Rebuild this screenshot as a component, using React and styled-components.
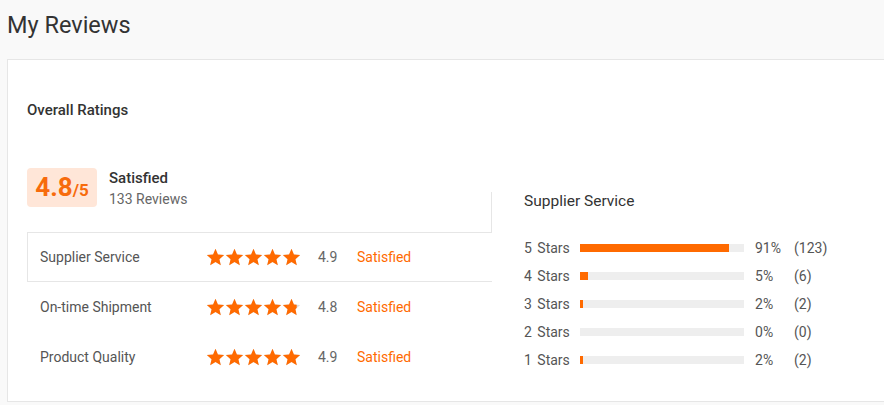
import React from "react";
import styled, { createGlobalStyle } from "styled-components";

const GlobalStyle = createGlobalStyle`
  body {
    margin: 0;
    background: #f9f9f9;
    font-family: Roboto, "Liberation Sans", Arial, sans-serif;
    overflow: hidden;
  }
`;

const Page = styled.div`
  width: 884px;
  height: 405px;
  overflow: hidden;
`;

const Title = styled.h1`
  margin: 0;
  height: 59px;
  padding: 11px 0 0 7px;
  box-sizing: border-box;
  font-size: 23.5px;
  line-height: 28px;
  font-weight: 400;
  color: #333;
`;

const Card = styled.div`
  margin-left: 7px;
  width: 900px;
  height: 343px;
  box-sizing: border-box;
  background: #fff;
  border: 1px solid #e6e6e6;
  padding: 40px 0 0 19px;
`;

const SectionTitle = styled.div`
  font-size: 15px;
  line-height: 20px;
  font-weight: 500;
  color: #333;
  margin-bottom: 48px;
`;

const Content = styled.div`
  display: flex;
  align-items: flex-end;
`;

const LeftCol = styled.div`
  width: 464px;
`;

const Summary = styled.div`
  display: flex;
  align-items: flex-start;
  gap: 12px;
  margin-bottom: 23px;
`;

const ScoreBox = styled.div`
  width: 70px;
  height: 39px;
  border-radius: 4px;
  background: #ffe6d8;
  color: #f76b0c;
  display: flex;
  align-items: baseline;
  justify-content: center;
  padding-top: 3px;
  box-sizing: border-box;
`;

const ScoreBig = styled.span`
  font-size: 26px;
  font-weight: 700;
  line-height: 32px;
`;

const ScoreSmall = styled.span`
  font-size: 17px;
  font-weight: 700;
`;

const SummaryText = styled.div`
  display: flex;
  flex-direction: column;
`;

const SummaryLabel = styled.div`
  font-size: 15px;
  font-weight: 500;
  color: #333;
  line-height: 20px;
`;

const SummaryCount = styled.div`
  font-size: 14px;
  color: #666;
  line-height: 20px;
  margin-top: 1px;
`;

const RatingRow = styled.div`
  position: relative;
  z-index: 1;
  height: 50px;
  box-sizing: border-box;
  display: flex;
  align-items: center;
  padding-left: 12px;
  background: #fff;
  margin-right: -1px;
  border: 1px solid ${(p) => (p.$active ? "#e6e6e6" : "transparent")};
  border-right: none;
  cursor: pointer;
`;

const RowLabel = styled.div`
  width: 166px;
  font-size: 14px;
  color: #555;
`;

const Stars = styled.div`
  display: flex;
  width: 112px;
`;

const RowScore = styled.div`
  width: 39px;
  font-size: 14px;
  color: #666;
`;

const RowStatus = styled.div`
  font-size: 14px;
  color: #ff6a00;
`;

const RightPanel = styled.div`
  flex: 1;
  height: 190px;
  box-sizing: border-box;
  border-left: 1px solid #e6e6e6;
  padding: 0 0 0 32px;
`;

const PanelTitle = styled.div`
  font-size: 15.5px;
  line-height: 18px;
  color: #333;
  margin-bottom: 24px;
`;

const BarRow = styled.div`
  display: flex;
  align-items: center;
  height: 28px;
  font-size: 14px;
  color: #555;
`;

const BarLabel = styled.div`
  width: 56px;
  word-spacing: 2px;
`;

const Track = styled.div`
  width: 164px;
  height: 8px;
  background: #eeeeee;
  margin-right: 11px;
`;

const Fill = styled.div`
  height: 100%;
  background: #ff6a00;
`;

const Pct = styled.div`
  width: 39px;
`;

const STAR = "M12 17.27L18.18 21l-1.64-7.03L22 9.24l-7.19-.61L12 2 9.19 8.63 2 9.24l5.46 4.73L5.82 21z";

const Star = ({ fill, id }) => (
  <svg width="19" height="19" viewBox="1 1 22 22">
    <defs>
      <clipPath id={id}>
        <rect x="0" y="0" width={2 + 20 * fill} height="24" />
      </clipPath>
    </defs>
    <path d={STAR} fill="#ddd" />
    <path d={STAR} fill="#ff6a00" clipPath={`url(#${id})`} />
  </svg>
);

const StarRating = ({ value, name }) => (
  <Stars>
    {[0, 1, 2, 3, 4].map((i) => {
      const f = Math.max(0, Math.min(1, value - i));
      return <Star key={i} id={`${name}-${i}`} fill={f} />;
    })}
  </Stars>
);

const ratings = [
  { label: "Supplier Service", stars: 5, score: "4.9", active: true },
  { label: "On-time Shipment", stars: 4.8, score: "4.8" },
  { label: "Product Quality", stars: 5, score: "4.9" },
];

const dist = [
  { n: 5, pct: 91, count: 123 },
  { n: 4, pct: 5, count: 6 },
  { n: 3, pct: 2, count: 2 },
  { n: 2, pct: 0, count: 0 },
  { n: 1, pct: 2, count: 2 },
];

export default function App() {
  return (
    <Page>
      <GlobalStyle />
      <Title>My Reviews</Title>
      <Card>
        <SectionTitle>Overall Ratings</SectionTitle>
        <Content>
          <LeftCol>
            <Summary>
              <ScoreBox>
                <ScoreBig>4.8</ScoreBig>
                <ScoreSmall>/5</ScoreSmall>
              </ScoreBox>
              <SummaryText>
                <SummaryLabel>Satisfied</SummaryLabel>
                <SummaryCount>133 Reviews</SummaryCount>
              </SummaryText>
            </Summary>
            {ratings.map((r, i) => (
              <RatingRow key={r.label} $active={r.active}>
                <RowLabel>{r.label}</RowLabel>
                <StarRating value={r.stars} name={`r${i}`} />
                <RowScore>{r.score}</RowScore>
                <RowStatus>Satisfied</RowStatus>
              </RatingRow>
            ))}
          </LeftCol>
          <RightPanel>
            <PanelTitle>Supplier Service</PanelTitle>
            {dist.map((d) => (
              <BarRow key={d.n}>
                <BarLabel>{d.n} Stars</BarLabel>
                <Track>
                  <Fill style={{ width: `${d.pct}%` }} />
                </Track>
                <Pct>{d.pct}%</Pct>
                <div>({d.count})</div>
              </BarRow>
            ))}
          </RightPanel>
        </Content>
      </Card>
    </Page>
  );
}
